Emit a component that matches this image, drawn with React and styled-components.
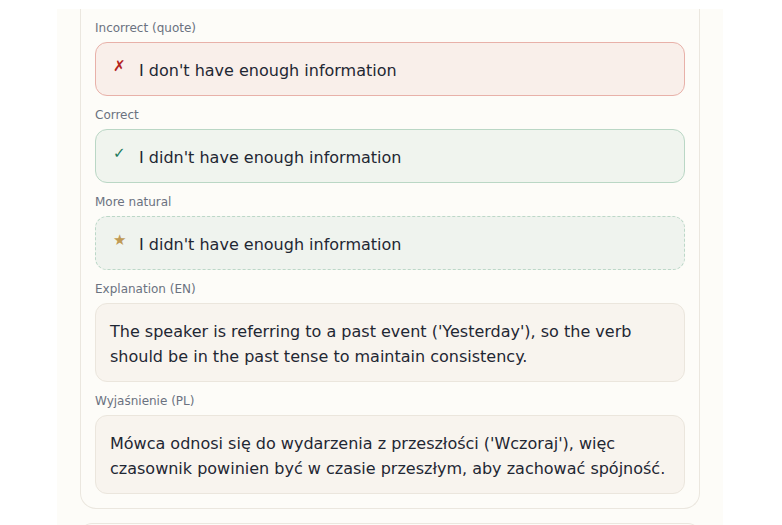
import React from 'react'
import styled, { createGlobalStyle } from 'styled-components'

const GlobalStyle = createGlobalStyle`
  html, body {
    margin: 0;
    padding: 0;
    background: #ffffff;
  }
  body {
    font-family: 'DejaVu Sans', 'Noto Sans', sans-serif;
    color: #1f2733;
  }
`

const TopStrip = styled.div`
  height: 9px;
  background: #ffffff;
`

const Column = styled.main`
  width: 666px;
  margin-left: 57px;
  background: #fdfcf8;
  padding: 0 23px 0 23px;
  box-sizing: border-box;
  min-height: 516px;
  display: flex;
  flex-direction: column;
  gap: 14px;
`

const Card = styled.section`
  background: #fdfcf8;
  border: 1px solid #ebe7df;
  border-top: ${(p) => (p.$open ? 'none' : '1px solid #ebe7df')};
  border-radius: ${(p) => (p.$open ? '0 0 16px 16px' : '16px 16px 0 0')};
  padding: ${(p) => (p.$open ? '11px 14px 14px' : '0 14px')};
  min-height: ${(p) => (p.$open ? '0' : '10px')};
  display: flex;
  flex-direction: column;
  gap: 11px;
`

const Field = styled.div`
  display: flex;
  flex-direction: column;
`

const Label = styled.div`
  font-size: 12px;
  line-height: 16px;
  color: #6b7280;
  margin-bottom: 6px;
`

const tones = {
  bad: { bg: '#f9efea', border: '1px solid #e8b1a9', icon: '#b3221c' },
  good: { bg: '#f0f4ee', border: '1px solid #bad7c5', icon: '#1d7a5c' },
  nice: { bg: '#eff3ee', border: '1px dashed #bcd8c8', icon: '#c09a55' },
}

const Quote = styled.div`
  display: flex;
  align-items: flex-start;
  gap: 14px;
  height: 54px;
  box-sizing: border-box;
  padding: 16px 17px 12px;
  border-radius: 12px;
  background: ${(p) => tones[p.$tone].bg};
  border: ${(p) => tones[p.$tone].border};
`

const Mark = styled.span`
  width: 12px;
  font-size: 15px;
  line-height: 16px;
  margin-top: -1px;
  color: ${(p) => tones[p.$tone].icon};
  text-align: center;
`

const QuoteText = styled.span`
  font-size: 16px;
  line-height: 24px;
  color: #1f2733;
`

const Explain = styled.div`
  background: #f8f4ee;
  border: 1px solid #ebe6dd;
  border-radius: 12px;
  padding: 15px 14px 12px;
  font-size: 16px;
  line-height: 25px;
  color: #1f2733;
`

const marks = { bad: '✗', good: '✓', nice: '★' }

const quotes = [
  { label: 'Incorrect (quote)', tone: 'bad', text: "I don't have enough information" },
  { label: 'Correct', tone: 'good', text: "I didn't have enough information" },
  { label: 'More natural', tone: 'nice', text: "I didn't have enough information" },
]

const explanations = [
  {
    label: 'Explanation (EN)',
    text: "The speaker is referring to a past event ('Yesterday'), so the verb should be in the past tense to maintain consistency.",
  },
  {
    label: 'Wyjaśnienie (PL)',
    text: "Mówca odnosi się do wydarzenia z przeszłości ('Wczoraj'), więc czasownik powinien być w czasie przeszłym, aby zachować spójność.",
  },
]

const App = () => {
  return (
    <>
      <GlobalStyle />
      <TopStrip />
      <Column>
        <Card $open>
          {quotes.map((q) => (
            <Field key={q.label}>
              <Label>{q.label}</Label>
              <Quote $tone={q.tone}>
                <Mark $tone={q.tone}>{marks[q.tone]}</Mark>
                <QuoteText>{q.text}</QuoteText>
              </Quote>
            </Field>
          ))}
          {explanations.map((e) => (
            <Field key={e.label}>
              <Label>{e.label}</Label>
              <Explain>{e.text}</Explain>
            </Field>
          ))}
        </Card>
        <Card />
      </Column>
    </>
  )
}

export default App
